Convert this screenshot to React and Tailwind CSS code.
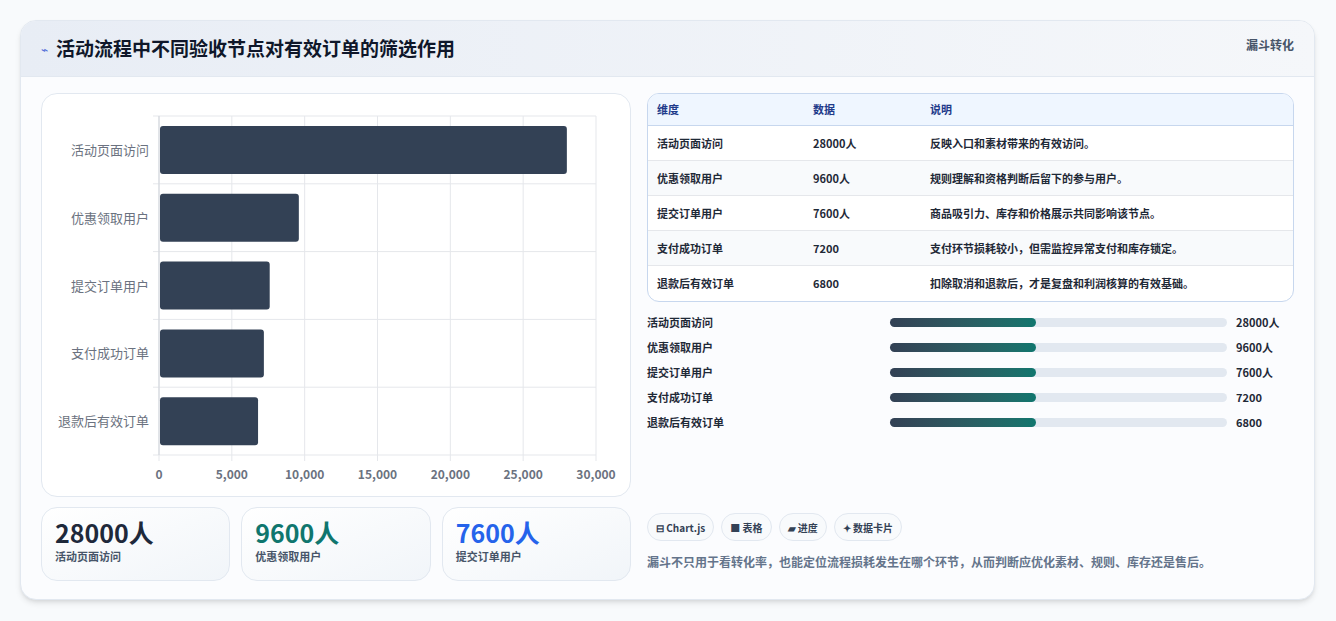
import React from "react";

const F = { fontFamily: '"Noto Sans CJK SC", "Noto Sans", sans-serif' };

const rows = [
  ["活动页面访问", 28000, "28000人", "反映入口和素材带来的有效访问。"],
  ["优惠领取用户", 9600, "9600人", "规则理解和资格判断后留下的参与用户。"],
  ["提交订单用户", 7600, "7600人", "商品吸引力、库存和价格展示共同影响该节点。"],
  ["支付成功订单", 7200, "7200", "支付环节损耗较小，但需监控异常支付和库存锁定。"],
  ["退款后有效订单", 6800, "6800", "扣除取消和退款后，才是复盘和利润核算的有效基础。"],
];

function Chart() {
  const x0 = 117, w = 437, y0 = 22, h = 339;
  const band = h / 5;
  return (
    <svg width="589" height="403" className="block">
      {[0, 1, 2, 3, 4, 5, 6].map((i) => (
        <line key={i} x1={x0 + (w * i) / 6} x2={x0 + (w * i) / 6} y1={y0} y2={y0 + h + 6} stroke="#e5e7eb" />
      ))}
      {[0, 1, 2, 3, 4, 5].map((i) => (
        <line key={i} x1={x0 - 6} x2={x0 + w} y1={y0 + band * i} y2={y0 + band * i} stroke="#e5e7eb" />
      ))}
      <line x1={x0} x2={x0} y1={y0} y2={y0 + h} stroke="#d1d5db" />
      {rows.map((r, i) => (
        <g key={i}>
          <rect x={x0 + 1} y={y0 + band * i + 10} width={(w * r[1]) / 30000 - 1} height={48} rx="3" fill="#334155" />
          <text x={x0 - 10} y={y0 + band * i + band / 2 + 5} textAnchor="end" fontSize="13" fill="#6b7280" style={F}>{r[0]}</text>
        </g>
      ))}
      {["0", "5,000", "10,000", "15,000", "20,000", "25,000", "30,000"].map((t, i) => (
        <text key={t} x={x0 + (w * i) / 6} y={y0 + h + 24} textAnchor="middle" fontSize="12" fontWeight="600" fill="#6b7280" style={F}>{t}</text>
      ))}
    </svg>
  );
}

export default function App() {
  return (
    <div className="w-[1336px] h-[621px] bg-[#f8fafc] pt-5 px-5" style={F}>
      <div className="w-[1295px] h-[580px] bg-[#fbfcfe] rounded-2xl border border-[#e2e8f0] shadow-md overflow-hidden">
        <div className="h-[56px] bg-gradient-to-r from-[#e8edf5] to-[#f5f7fa] border-b border-[#e2e8f0] flex justify-between px-5">
          <div className="flex items-center gap-2">
            <span className="text-[#4f6bd8] text-xs">⌁</span>
            <h1 className="text-[19px] font-bold text-[#0f172a]">活动流程中不同验收节点对有效订单的筛选作用</h1>
          </div>
          <div className="pt-4 text-xs font-bold text-[#475569]">漏斗转化</div>
        </div>
        <div className="flex gap-4 px-5 pt-4">
          <div className="w-[590px]">
            <div className="h-[404px] bg-white rounded-2xl border border-[#e2e8f0]">
              <Chart />
            </div>
            <div className="flex gap-[11px] mt-[10px]">
              {[["28000人", "text-[#1e293b]", "活动页面访问"], ["9600人", "text-[#0f766e]", "优惠领取用户"], ["7600人", "text-[#2563eb]", "提交订单用户"]].map(([v, c, l]) => (
                <div key={l} className="w-[190px] h-[74px] rounded-2xl border border-[#e2e8f0] bg-gradient-to-br from-white to-[#f1f5f9] px-[13px] pt-2">
                  <div className={`text-[25px] font-bold leading-8 ${c}`}>{v}</div>
                  <div className="text-[11px] font-semibold text-[#475569]">{l}</div>
                </div>
              ))}
            </div>
          </div>
          <div className="w-[652px] flex flex-col">
            <div className="rounded-xl border border-[#c7d7ee] bg-white overflow-hidden">
              <div className="grid grid-cols-[156px_117px_1fr] h-[32px] items-center bg-[#eff6ff] border-b border-[#c7d7ee] px-[9px] text-[11px] font-bold text-[#1e3a8a]">
                <div>维度</div><div>数据</div><div>说明</div>
              </div>
              {rows.map((r, i) => (
                <div key={i} className={`grid grid-cols-[156px_117px_1fr] h-[35px] items-center px-[9px] text-[11px] font-semibold text-[#1f2937] ${i < 4 ? "border-b border-[#e5e7eb]" : ""} ${i % 2 ? "bg-[#f8fafc]" : ""}`}>
                  <div>{r[0]}</div><div>{r[2]}</div><div>{r[3]}</div>
                </div>
              ))}
            </div>
            <div className="mt-[11px] flex flex-col gap-[7px]">
              {rows.map((r, i) => (
                <div key={i} className="flex items-center h-[18px] text-[11px] font-semibold text-[#1f2937]">
                  <div className="w-[243px]">{r[0]}</div>
                  <div className="w-[337px] h-[9px] rounded-full bg-[#e2e8f0]">
                    <div className="w-[146px] h-full rounded-full bg-gradient-to-r from-[#334155] to-[#0f766e]" />
                  </div>
                  <div className="ml-[9px] font-bold">{r[2]}</div>
                </div>
              ))}
            </div>
            <div className="mt-auto mb-[10px]">
              <div className="flex gap-[7px]">
                {["⊟ Chart.js", "■ 表格", "▰ 进度", "✦ 数据卡片"].map((t) => (
                  <span key={t} className="h-[28px] px-[8px] rounded-full border border-[#e2e8f0] bg-[#f8fafc] text-[10px] font-bold text-[#334155] flex items-center">{t}</span>
                ))}
              </div>
              <p className="mt-[12px] text-[12px] font-semibold text-[#64748b]">漏斗不只用于看转化率，也能定位流程损耗发生在哪个环节，从而判断应优化素材、规则、库存还是售后。</p>
            </div>
          </div>
        </div>
      </div>
    </div>
  );
}
